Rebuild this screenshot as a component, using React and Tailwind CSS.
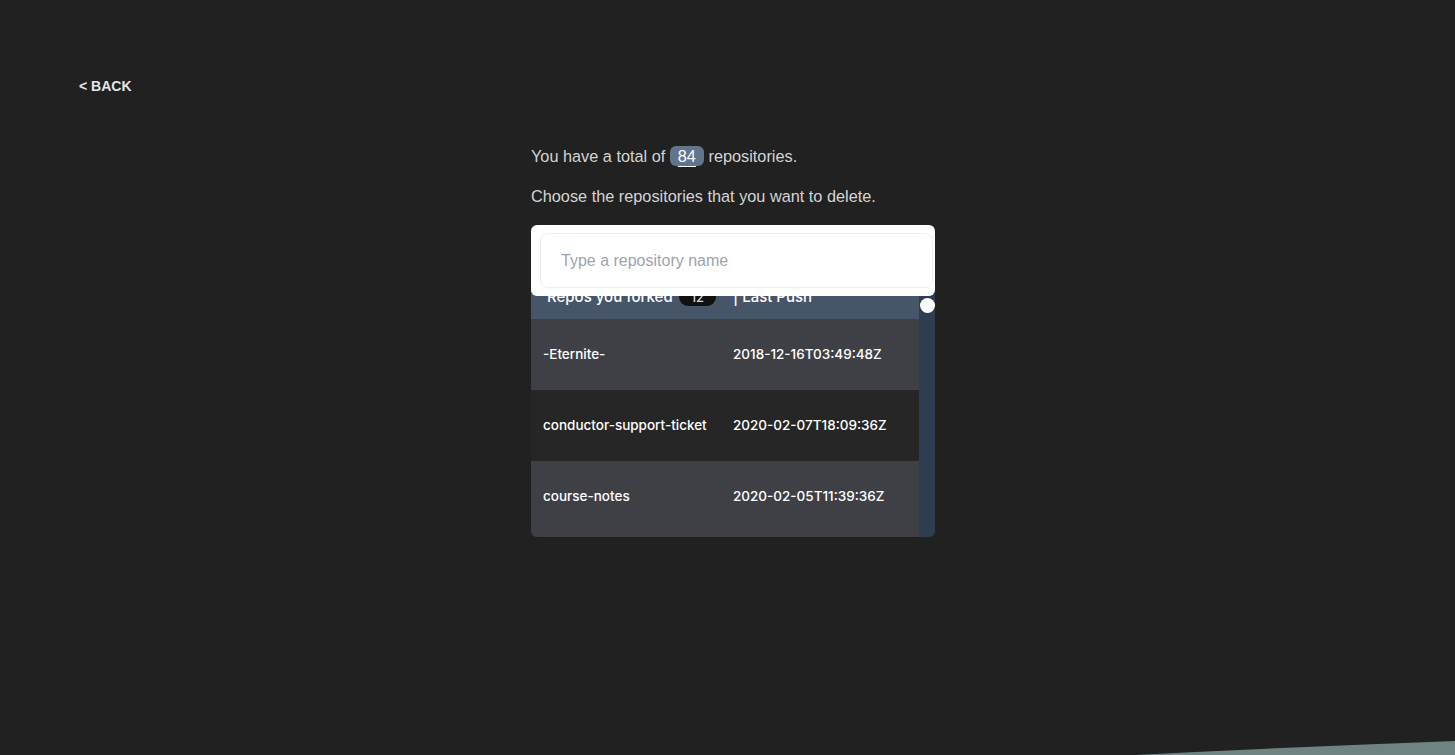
import { useState } from "react";

const repos = [
  { name: "-Eternite-", pushed: "2018-12-16T03:49:48Z" },
  { name: "conductor-support-ticket", pushed: "2020-02-07T18:09:36Z" },
  { name: "course-notes", pushed: "2020-02-05T11:39:36Z" },
];

export default function App() {
  const [query, setQuery] = useState("");

  return (
    <div
      className="relative h-screen w-full overflow-hidden bg-[#212121] text-[#d4d4d4]"
      style={{ fontFamily: "'Liberation Sans', Arial, sans-serif" }}
    >
      <div className="pl-[79px] pt-[74px]">
        <a href="#" className="text-[14px] font-bold leading-[18px] text-[#e5e5e5]">
          &lt; BACK
        </a>
      </div>

      <div className="ml-[531px] mt-[46px] w-[404px]">
        <p className="text-[16.3px] leading-6">
          You have a total of{" "}
          <span className="inline-block rounded-md bg-[#64748b] px-2 leading-[20px] text-white underline underline-offset-4">
            84
          </span>{" "}
          repositories.
        </p>
        <p className="mt-[16px] text-[16.3px] leading-6">
          Choose the repositories that you want to delete.
        </p>

        {/* search card */}
        <div className="relative z-10 mt-[17px] h-[71px] rounded-md bg-white pl-[9px] pr-[2px] pt-2">
          <input
            value={query}
            onChange={(e) => setQuery(e.target.value)}
            placeholder="Type a repository name"
            className="h-[55px] w-full rounded-lg border border-[#eceef1] px-5 text-[16px] text-[#111827] outline-none placeholder:text-[#9ca3af]"
          />
        </div>

        {/* table, scrolled under the search card */}
        <div
          className="-mt-[21px] flex h-[262px] overflow-hidden rounded-b-md"
          style={{ fontFamily: "Inter, 'Liberation Sans', sans-serif" }}
        >
          <div className="flex-1 bg-[#3f3f46]">
            <div className="grid h-[44px] grid-cols-[202px_1fr] items-center bg-[#475569] text-[15px] font-medium text-white">
              <div className="flex items-center gap-1 pl-4">
                <span>Repos you forked</span>
                <span className="ml-0.5 rounded-full bg-[#111111] px-3 text-[13px] leading-[18px] text-[#d1d5db]">
                  12
                </span>
              </div>
              <div>| Last Push</div>
            </div>
            {repos.map((r, i) => (
              <div
                key={r.name}
                className={`grid h-[71px] grid-cols-[202px_1fr] items-center text-[13.5px] font-medium text-white ${
                  i % 2 === 0 ? "bg-[#3f3f46]" : "bg-[#262626]"
                }`}
              >
                <div className="pl-3">{r.name}</div>
                <div>{r.pushed}</div>
              </div>
            ))}
          </div>
          {/* scrollbar */}
          <div className="flex w-[16px] justify-center bg-[#2f3d51] pt-[23px]">
            <div className="h-[15px] w-[15px] rounded-full bg-white" />
          </div>
        </div>
      </div>

      {/* decorative curve bottom right */}
      <svg
        className="pointer-events-none absolute bottom-0 right-0"
        width="320"
        height="16"
        viewBox="0 0 320 16"
      >
        <path d="M0 16 Q160 8 320 2 L320 16 Z" fill="#6f8482" />
      </svg>
    </div>
  );
}
